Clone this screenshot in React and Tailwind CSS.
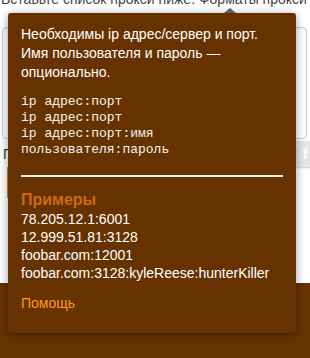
import React from "react";

const FORMATS = ["ip адрес:порт", "ip адрес:порт", "ip адрес:порт:имя", "пользователя:пароль"];
const EXAMPLES = [
  "78.205.12.1:6001",
  "12.999.51.81:3128",
  "foobar.com:12001",
  "foobar.com:3128:kyleReese:hunterKiller",
];

function ProxyHint() {
  return (
    <div className="absolute left-[8px] top-[13px] w-[288px] h-[320px] rounded-[3px] bg-[#663300] px-[13px] pt-[12px] shadow-[0_2px_10px_rgba(0,0,0,0.4)]">
      {/* arrow */}
      <div className="absolute -top-[5px] left-[216px] w-0 h-0 border-x-[6px] border-x-transparent border-b-[5px] border-b-[#5c5c5c]" />
      <p className="text-[14px] leading-[19px] text-white">
        Необходимы ip адрес/сервер и порт. Имя пользователя и пароль — опционально.
      </p>
      <div className="mt-[12px] font-['Liberation_Mono',monospace] text-[13px] leading-[16px] text-[#f2f2f2]">
        {FORMATS.map((f, i) => (
          <div key={i}>{f}</div>
        ))}
      </div>
      <div className="mt-[17px] h-[2px] bg-[#f4f0ec]" />
      <div className="mt-[13px] text-[16px] leading-[20px] font-bold text-[#cc6a14]">Примеры</div>
      <div className="text-[14px] leading-[18px] text-white">
        {EXAMPLES.map((e) => (
          <div key={e}>{e}</div>
        ))}
      </div>
      <div className="mt-[12px] text-[14px] leading-[18px] text-[#ff9a1a]">Помощь</div>
    </div>
  );
}

export default function App() {
  return (
    <div className="relative w-[310px] h-[358px] overflow-hidden bg-white font-['Liberation_Sans',Arial,sans-serif]">
      <div className="flex flex-col h-full">
        <div className="-mt-[10px] pl-[1px] text-[14px] leading-[18px] text-[#444] whitespace-nowrap">
          Вставьте список прокси ниже. Форматы прокси
        </div>
        <div className="mt-[19px] ml-[2px] mr-[3px] h-[112px] rounded-[4px] border border-[#cfcfcf] shadow-[inset_0_1px_2px_rgba(0,0,0,0.08)]" />
        <div className="mt-[2px] flex items-start justify-between">
          <span className="pl-[3px] pt-[4px] text-[14px] leading-[18px] text-[#333]">Проверить</span>
          <div className="mr-[-6px] w-[22px] h-[26px] rounded-[4px] bg-[#e6e6e6] shadow-[0_1px_2px_rgba(0,0,0,0.2)] flex items-center justify-center text-white font-bold text-[15px]">
            f
          </div>
        </div>
        <div className="mt-[0px] ml-[7px] w-[2px] h-[31px] bg-[#d9882a]" />
        <div className="mt-auto h-[75px] bg-[#663300]" />
      </div>
      <ProxyHint />
    </div>
  );
}
